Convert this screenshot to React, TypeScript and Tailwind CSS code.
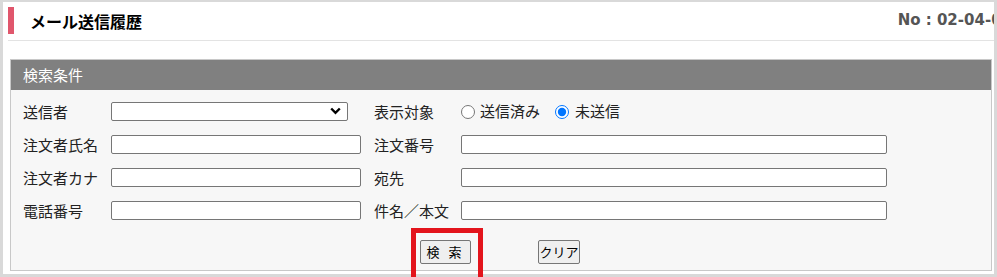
import { useState } from 'react'

const jp = { fontFamily: '"Noto Sans CJK JP", "Noto Sans", sans-serif' }

function Field({ label, width = 'w-[88px]', children }: { label: string; width?: string; children: React.ReactNode }) {
  return (
    <>
      <span className={`${width} shrink-0 text-[15px] leading-none text-[#222]`}>{label}</span>
      {children}
    </>
  )
}

function TextBox({ w }: { w: string }) {
  return <input type="text" className={`${w} h-[19px] rounded-[2px] border border-[#767676] bg-white px-1 text-[13px] outline-none`} />
}

export default function App() {
  const [target, setTarget] = useState('unsent')

  return (
    <div className="relative h-[277px] w-[997px] overflow-hidden bg-[#d9d9d9] pt-[2px] pl-[3px] pr-[3px] pb-[3px]" style={jp}>
      <div className="h-full w-full overflow-hidden bg-white">
        {/* page header */}
        <div className="ml-[5px] flex h-[39px] items-center border-b border-[#e3e3e3] pb-[1px]">
          <span className="h-[27px] w-[6px] shrink-0 bg-[#e0566c]" />
          <h1 className="ml-[16px] text-[16px] font-bold text-black">メール送信履歴</h1>
          <span
            className="ml-auto mr-[-18px] whitespace-nowrap text-[15px] font-bold text-[#555]"
            style={{ fontFamily: '"DejaVu Sans", Verdana, sans-serif' }}
          >
            No : 02-04-01
          </span>
        </div>

        {/* search panel */}
        <div className="mt-[18px] ml-[7px] mr-[2px] border border-[#c8c8c8] bg-[#f7f7f7]">
          <div className="flex h-[30px] items-center bg-[#808080] pl-[12px] text-[15px] text-white">検索条件</div>
          <div className="pl-[12px] pt-[5px]">
            <div className="flex h-[33px] items-center">
              <Field label="送信者">
                <div className="relative h-[19px] w-[237px] rounded-[2px] border border-[#767676] bg-white">
                  <svg className="absolute right-[6px] top-[4px]" width="11" height="8" viewBox="0 0 11 8">
                    <path d="M1.2 1.5 L5.5 5.8 L9.8 1.5" fill="none" stroke="#000" strokeWidth="2.4" />
                  </svg>
                </div>
              </Field>
              <span className="w-[26px]" />
              <Field label="表示対象" width="w-[87px]">
                <label className="flex items-center text-[15px] text-[#222]">
                  <input
                    type="radio"
                    name="target"
                    checked={target === 'sent'}
                    onChange={() => setTarget('sent')}
                    className="m-0 mr-[5px] h-[14px] w-[14px] accent-[#0075ff]"
                  />
                  送信済み
                </label>
                <label className="ml-[15px] flex items-center text-[15px] text-[#222]">
                  <input
                    type="radio"
                    name="target"
                    checked={target === 'unsent'}
                    onChange={() => setTarget('unsent')}
                    className="m-0 mr-[6px] h-[14px] w-[14px] accent-[#0075ff]"
                  />
                  未送信
                </label>
              </Field>
            </div>
            <div className="flex h-[33px] items-center">
              <Field label="注文者氏名">
                <TextBox w="w-[250px]" />
              </Field>
              <span className="w-[13px]" />
              <Field label="注文番号" width="w-[87px]">
                <TextBox w="w-[426px]" />
              </Field>
            </div>
            <div className="flex h-[33px] items-center">
              <Field label="注文者カナ">
                <TextBox w="w-[250px]" />
              </Field>
              <span className="w-[13px]" />
              <Field label="宛先" width="w-[87px]">
                <TextBox w="w-[426px]" />
              </Field>
            </div>
            <div className="flex h-[33px] items-center">
              <Field label="電話番号">
                <TextBox w="w-[250px]" />
              </Field>
              <span className="w-[13px]" />
              <Field label="件名／本文" width="w-[87px]">
                <TextBox w="w-[426px]" />
              </Field>
            </div>
          </div>
          <div className="flex justify-center gap-[67px] pt-[13px] pb-[6px] pr-[2px]">
            <button className="h-[24px] w-[51px] rounded-[2px] border border-[#767676] bg-[#efefef] text-[13px] tracking-[3px] text-black">
              検 索
            </button>
            <button className="h-[24px] w-[42px] rounded-[2px] border border-[#767676] bg-[#efefef] text-[13px] text-black">
              クリア
            </button>
          </div>
        </div>
      </div>

      {/* highlight annotation */}
      <div className="absolute left-[411px] top-[228px] h-[60px] w-[72px] border-[5px] border-[#e3141c]" />
    </div>
  )
}
